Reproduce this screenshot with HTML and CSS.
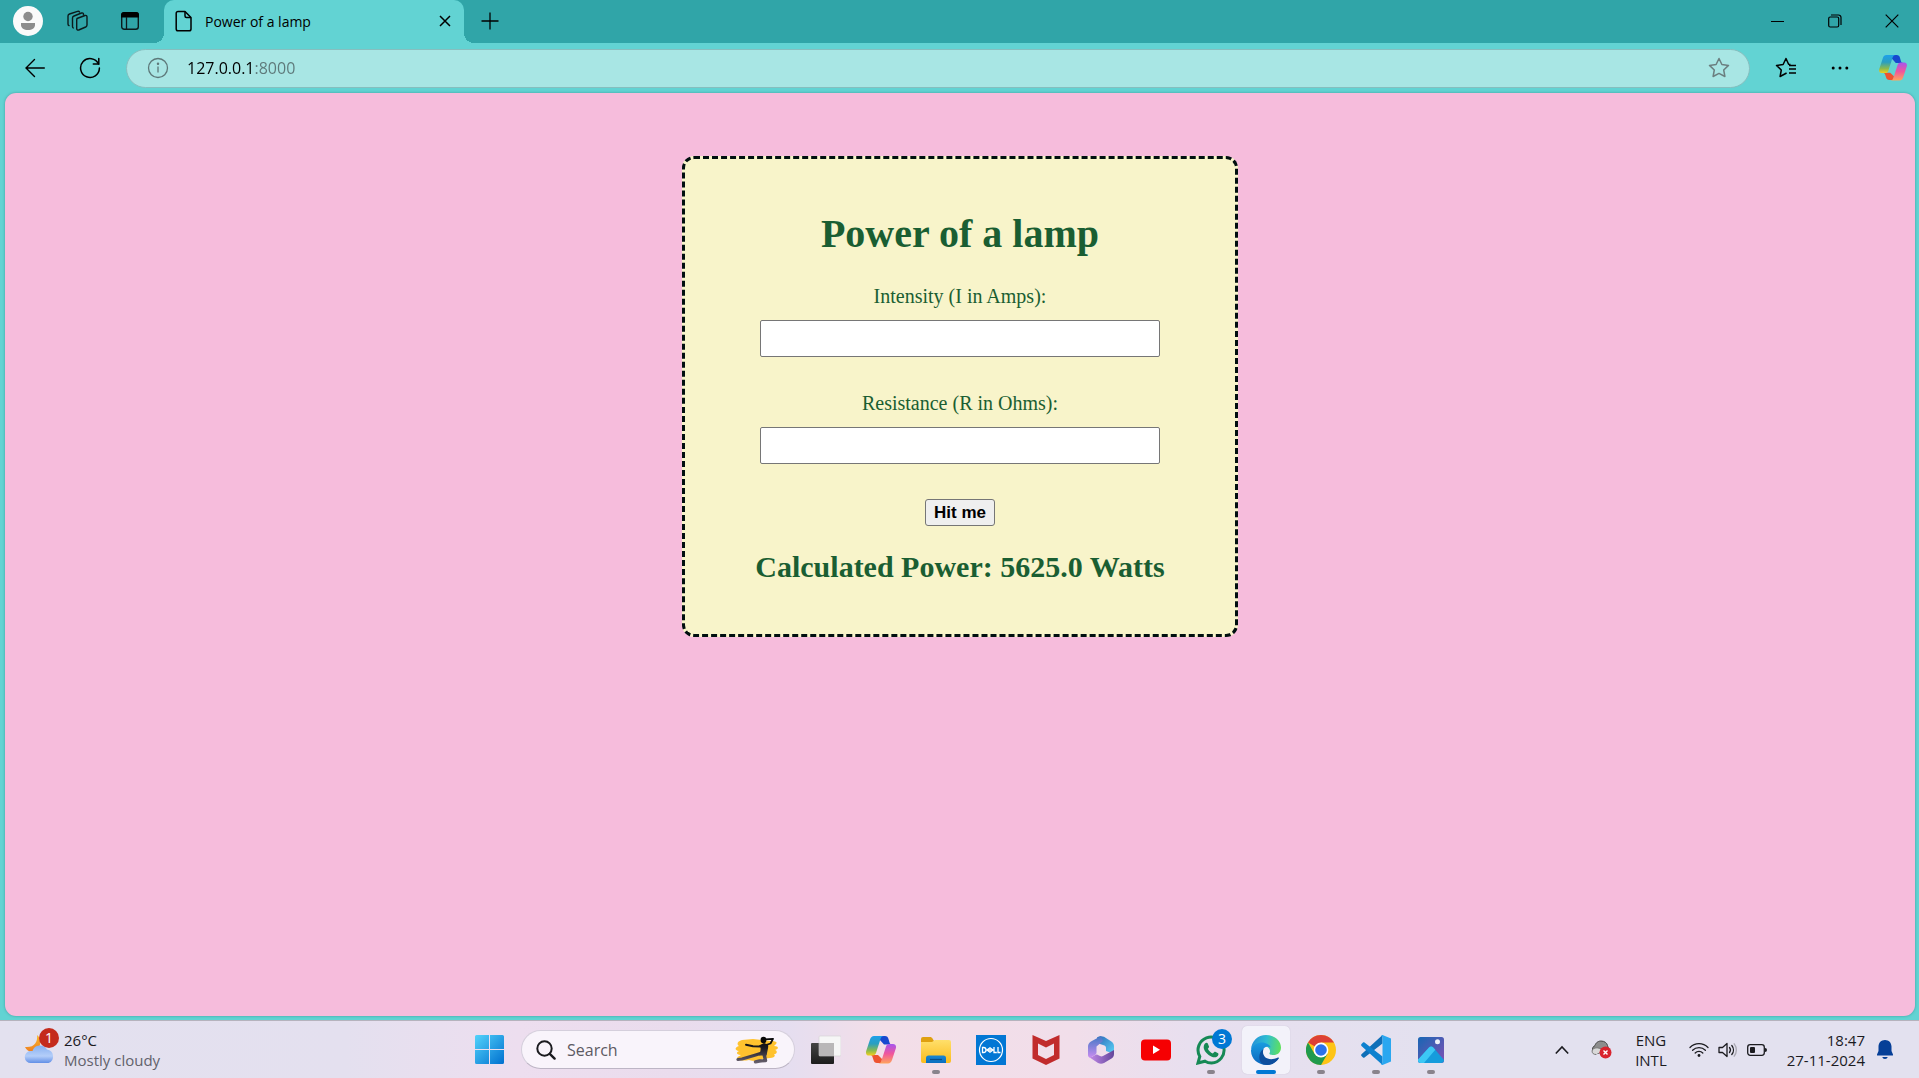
FILE: index.html
```html
<!DOCTYPE html>
<html lang="en">
<head>
<meta charset="utf-8">
<title>Power of a lamp</title>
<link rel="stylesheet" href="styles.css">
</head>
<body>
<svg class="defs" aria-hidden="true">
  <defs>
    <linearGradient id="cpA" x1="0" y1="0" x2="0" y2="1"><stop offset="0" stop-color="#1ea0ea"/><stop offset=".4" stop-color="#2a9fc0"/><stop offset=".75" stop-color="#8cba4c"/><stop offset="1" stop-color="#f3cf1d"/></linearGradient>
    <linearGradient id="cpB" x1="0" y1="0" x2="0" y2="1"><stop offset="0" stop-color="#a555ee"/><stop offset=".5" stop-color="#f0569c"/><stop offset="1" stop-color="#ffa45c"/></linearGradient>
    <linearGradient id="win" x1="0" y1="0" x2="1" y2="1"><stop offset="0" stop-color="#53d3fb"/><stop offset="1" stop-color="#0070cf"/></linearGradient>
    <linearGradient id="fold" x1="0" y1="0" x2="0" y2="1"><stop offset="0" stop-color="#ffdf6b"/><stop offset="1" stop-color="#fbbc1d"/></linearGradient>
    <linearGradient id="blue" x1="0" y1="0" x2="0" y2="1"><stop offset="0" stop-color="#1a86d0"/><stop offset="1" stop-color="#0a6ec0"/></linearGradient>
    <linearGradient id="cloud" x1="0" y1="0" x2="0" y2="1"><stop offset="0" stop-color="#88b0f0"/><stop offset=".6" stop-color="#b4cef9"/><stop offset="1" stop-color="#628fe6"/></linearGradient>
    <linearGradient id="moon" x1="0" y1="0" x2="0" y2="1"><stop offset="0" stop-color="#fbb829"/><stop offset="1" stop-color="#ee7f22"/></linearGradient>
    <linearGradient id="dark" x1="0" y1="0" x2="0" y2="1"><stop offset="0" stop-color="#444"/><stop offset="1" stop-color="#1c1c1c"/></linearGradient>
    <linearGradient id="edgeTop" x1="0" y1=".4" x2="1" y2=".5"><stop offset="0" stop-color="#2590d8"/><stop offset=".5" stop-color="#2fbdd2"/><stop offset="1" stop-color="#5fe05e"/></linearGradient>
    <linearGradient id="edgeLeft" x1="0" y1="0" x2="0" y2="1"><stop offset="0" stop-color="#1a9be0"/><stop offset="1" stop-color="#0a66bd"/></linearGradient>
    <linearGradient id="photo" x1="0" y1="0" x2="1" y2="1"><stop offset="0" stop-color="#1767b4"/><stop offset="1" stop-color="#8250b4"/></linearGradient>
    <linearGradient id="m1" x1="0" y1="0" x2="1" y2="1"><stop offset="0" stop-color="#2d69b8"/><stop offset="1" stop-color="#5ad4f8"/></linearGradient>
    <linearGradient id="m2" x1="0" y1="0" x2="0" y2="1"><stop offset="0" stop-color="#3f78c4"/><stop offset="1" stop-color="#c78cf0"/></linearGradient>
    <linearGradient id="m3" x1="0" y1="0" x2="1" y2="0"><stop offset="0" stop-color="#c48bea"/><stop offset="1" stop-color="#63469a"/></linearGradient>
    <linearGradient id="kick" gradientUnits="userSpaceOnUse" x1="0" y1="2" x2="0" y2="27"><stop offset="0" stop-color="#050505"/><stop offset=".4" stop-color="#1c1a20"/><stop offset="1" stop-color="#68616f"/></linearGradient>
    <symbol id="copilot" viewBox="0 0 30 28">
      <path d="M15 0h4c2 0 3 1 3.500 3l1 3.500c.5 1.500 1 2 2.500 2h-8L13 3z" fill="#1748cf"/>
      <path d="M15.500 27H11c-2 0-3-1-3.500-3l-1-3c-.5-1.500-1-2-2.500-2h8l4 4z" fill="#ee5330"/>
      <path d="M8 0h10c-2 0-3 1.300-3.500 3L10 17c-.5 1.500-1.500 2.500-3.500 2.500H3c-2.500 0-3.500-2-2.800-4.500L4 3.500C4.800 1.200 6 0 8 0z" fill="url(#cpA)"/>
      <path d="M22 27.500H12c2 0 3-1.300 3.500-3L20 10.500C20.500 9 21.500 8 23.500 8H27c2.500 0 3.500 2 2.800 4.500L26 24c-.8 2.300-2 3.500-4 3.500z" fill="url(#cpB)"/>
    </symbol>
  </defs>
</svg>

<header class="browser">
  <div class="tabstrip">
    <button class="chrome-btn avatar" aria-label="Profile"><svg width="30" height="30" viewBox="0 0 30 30"><circle cx="15" cy="15" r="15" fill="#fafafa"/><circle cx="15" cy="10.500" r="4.700" fill="#8c8c8c"/><path d="M8 17h14v2c0 3-3 5-7 5s-7-2-7-5z" fill="#8c8c8c"/></svg></button>
    <button class="chrome-btn" aria-label="Workspaces"><svg width="22" height="22" viewBox="0 0 22 22" fill="none" stroke="#0b1b1c" stroke-width="1.400" stroke-linejoin="round" stroke-linecap="round"><path d="M11 8.500l8-3c1-.3 2 .3 2 1.300V15c0 1-.5 1.600-1.300 2l-7 3c-1 .4-2-.2-2-1.200v-8.300c0-1 .3-1.700.3-2z"/><path d="M17.500 5V4.300c0-1-1-1.700-2-1.300L8 6c-1 .4-1.500 1-1.500 2v8.500c0 .7.300 1.200.8 1.500"/><path d="M13.500 2c-.3-.7-1-1-2-.7L3.500 4C2.500 4.400 2 5 2 6v8c0 .7.300 1.300 1 1.600"/></svg></button>
    <button class="chrome-btn" aria-label="Tab actions"><svg width="20" height="20" viewBox="0 0 20 20"><rect x="1.700" y="1.700" width="16.600" height="16.600" rx="2.500" fill="none" stroke="#0b1b1c" stroke-width="1.400"/><path d="M1 6.500V4a3 3 0 013-3h12a3 3 0 013 3v2.500z" fill="#000"/><path d="M6.500 6v12" stroke="#0b1b1c" stroke-width="1.300"/></svg></button>
    <div class="tab">
      <svg width="18" height="22" viewBox="0 0 18 22" fill="none" stroke="#000" stroke-width="1.500" stroke-linejoin="round"><path d="M3 1.500h7l6 6V19a1.800 1.800 0 01-1.800 1.800H3A1.800 1.800 0 011.200 19V3.300A1.800 1.800 0 013 1.500z"/><path d="M10 1.500V6a1.500 1.500 0 001.500 1.500H16"/></svg>
      <span class="tab-title">Power of a lamp</span>
      <button class="chrome-btn" aria-label="Close tab"><svg width="12" height="12" viewBox="0 0 12 12"><path d="M1 1l10 10M11 1L1 11" stroke="#000" stroke-width="1.500"/></svg></button>
    </div>
    <button class="chrome-btn" aria-label="New tab"><svg width="18" height="18" viewBox="0 0 18 18"><path d="M9 .5v17M.5 9h17" stroke="#000" stroke-width="1.300"/></svg></button>
    <div class="window-controls">
      <button class="chrome-btn" aria-label="Minimise"><svg width="14" height="14" viewBox="0 0 14 14"><path d="M0 7.500h13" stroke="#000"/></svg></button>
      <button class="chrome-btn" aria-label="Restore"><svg width="14" height="14" viewBox="0 0 14 14" fill="none" stroke="#000" stroke-width="1.200"><rect x=".7" y="3" width="10" height="10" rx="1.500"/><path d="M3 1h7.500A2.500 2.500 0 0113 3.500V11"/></svg></button>
      <button class="chrome-btn" aria-label="Close"><svg width="14" height="14" viewBox="0 0 14 14"><path d="M.7.700l12.600 12.600M13.300.700L.7 13.300" stroke="#000" stroke-width="1.200"/></svg></button>
    </div>
  </div>
  <div class="toolbar">
    <button class="chrome-btn" aria-label="Back"><svg width="20" height="20" viewBox="0 0 20 20" fill="none" stroke="#000" stroke-width="1.400" stroke-linecap="round"><path d="M19.300 10H1M9.500 1.500L1 10l8.500 8.500"/></svg></button>
    <button class="chrome-btn" aria-label="Refresh"><svg width="22" height="22" viewBox="0 0 22 22" fill="none" stroke="#000" stroke-width="1.500" stroke-linecap="round"><path d="M19.500 7A9.400 9.400 0 1020.400 11"/><path d="M19.800 1.500V7h-5.500"/></svg></button>
    <div class="address">
      <svg width="22" height="22" viewBox="0 0 22 22" fill="none" stroke="#5d7879" stroke-width="1.300"><circle cx="11" cy="11" r="9.500"/><path d="M11 9.500v6"/><circle cx="11" cy="6.800" r=".6" fill="#5d7879"/></svg>
      <input class="url" type="text" value="127.0.0.1:8000" aria-label="Address">
      <button class="chrome-btn" aria-label="Favourite this page"><svg width="22" height="22" viewBox="0 0 22 22" fill="none" stroke="#6b7f80" stroke-width="1.500" stroke-linejoin="round"><path d="M11 1.500l2.900 6 6.600.9-4.800 4.600 1.200 6.500L11 16.400l-5.900 3.100L6.300 13 1.500 8.400l6.600-.9z"/></svg></button>
    </div>
    <div class="tools">
      <button class="chrome-btn" aria-label="Favourites"><svg width="22" height="22" viewBox="0 0 22 22" fill="none" stroke="#000" stroke-width="1.500" stroke-linejoin="round"><path d="M15.500 7.500L13.600 7.300 11 1.500 8.100 7.500l-6.600.9L6.300 13l-1.200 6.500 6.500-3.500"/><path d="M14 8.500h7M14 12h7M14 16h7" stroke-width="1.400"/></svg></button>
      <button class="chrome-btn" aria-label="Settings"><svg width="18" height="6" viewBox="0 0 18 6"><circle cx="2.200" cy="3" r="1.500"/><circle cx="9" cy="3" r="1.500"/><circle cx="15.800" cy="3" r="1.500"/></svg></button>
      <button class="chrome-btn" aria-label="Copilot"><svg width="28" height="26"><use href="#copilot"/></svg></button>
    </div>
  </div>
</header>

<main class="page">
  <form class="card">
    <h1>Power of a lamp</h1>
    <label for="intensity">Intensity (I in Amps):</label>
    <input id="intensity" class="field" type="text">
    <label for="resistance">Resistance (R in Ohms):</label>
    <input id="resistance" class="field" type="text">
    <button class="submit" type="button">Hit me</button>
    <h2>Calculated Power: 5625.0 Watts</h2>
  </form>
</main>

<footer class="taskbar">
  <div class="weather">
    <div class="weather-icon">
      <svg width="32" height="30" viewBox="0 0 32 30"><path d="M13 0c1 7-3 13-12 12 2 5 8 6 12 3s5-12 0-15z" fill="url(#moon)"/><path d="M7 28a6 6 0 01-.5-12h2A8 8 0 0123 14.500a7 7 0 011.500 13.500z" fill="url(#cloud)"/></svg>
      <span class="badge badge-red">1</span>
    </div>
    <div class="stack"><span>26°C</span><span class="muted">Mostly cloudy</span></div>
  </div>

  <nav class="apps" aria-label="Taskbar apps">
    <button class="app" aria-label="Start"><svg width="30" height="30" viewBox="0 0 30 30"><path d="M1.500 0H14v14H0V1.500A1.500 1.500 0 011.500 0zM15 0h12.500A1.500 1.500 0 0129 1.500V14H15zM0 15h14v14H1.500A1.500 1.500 0 010 27.500zM15 15h14v12.500a1.500 1.500 0 01-1.500 1.500H15z" fill="url(#win)"/></svg></button>
    <div class="search">
      <svg width="20" height="20" viewBox="0 0 20 20" fill="none" stroke="#1b1b1f" stroke-width="2" stroke-linecap="round"><circle cx="8.500" cy="8.500" r="7.200"/><path d="M13.800 13.800l4.800 4.800" stroke-width="2.400"/></svg>
      <input type="search" placeholder="Search" aria-label="Search">
      <svg width="44" height="28" viewBox="0 0 44 28">
        <path d="M7 4l11-1 18 2c4 0 7 1 5 3l-2 2c5 0 5 3 1 4 3 1 2 4-1 4 2 2 0 4-4 4l-8 1c-4 3-9 2-13 1-5 1-11 1-12-2 1-2 3-2 4-3-5 0-5-3-2-4-5-1-4-4 0-5-3-2-1-5 3-6z" fill="#ffc22e"/>
        <g fill="none" stroke="url(#kick)" stroke-linejoin="round" stroke-linecap="round">
          <path d="M26 10.500L18 10.300l-7-1.500" stroke-width="2"/>
          <path d="M31 9l4.500-1.500L38 2.800l-8 .5" stroke-width="1.800"/>
          <path d="M27 17l-8 2.500L7 23l-4 .5" stroke-width="3.200"/>
          <path d="M29 18l1.500 6.500-6 .5-4 .8" stroke-width="3.400"/>
        </g>
        <path d="M24 9.500l5-2.500 4 1.500c.8 3-.8 6-1.300 11L24 19.500c1-3 2-5 1.500-8z" fill="url(#kick)"/>
        <ellipse cx="28.500" cy="4" rx="2.900" ry="3.300" fill="#080808"/>
      </svg>
    </div>
    <button class="app" aria-label="Task view"><svg width="30" height="30" viewBox="0 0 30 30"><rect x="0" y="8" width="23" height="21" rx="1" fill="url(#dark)"/><rect x="8" y="1" width="22" height="20" rx="1" fill="#f6f6f6" stroke="#d5d0d4" stroke-width=".6"/><path d="M8 8h15v13H9a1 1 0 01-1-1z" fill="#b9b7b8"/></svg></button>
    <button class="app" aria-label="Copilot"><svg width="30" height="28"><use href="#copilot"/></svg></button>
    <button class="app running" aria-label="File Explorer"><svg width="30" height="30" viewBox="0 0 30 30"><path d="M0 4a2 2 0 012-2h7c1 0 2 .5 2.500 1.500L13 6v3H0z" fill="#dfa010"/><path d="M0 7h11l3-2h14a2 2 0 012 2v19a2 2 0 01-2 2H2a2 2 0 01-2-2z" fill="url(#fold)"/><path d="M5 28v-5a2.500 2.500 0 012.500-2.500h15A2.500 2.500 0 0125 23v5z" fill="url(#blue)"/><path d="M9 24.500h12" stroke="#0a4d87" stroke-width="1.200"/></svg></button>
    <button class="app" aria-label="Dell"><svg width="30" height="30" viewBox="0 0 30 30"><rect width="30" height="30" fill="#0277d4"/><circle cx="15" cy="15" r="11.500" fill="none" stroke="#fff" stroke-width="1.200"/><g fill="none" stroke="#fff" stroke-width="1.300"><path d="M6.500 12.500v5h1.200a2.300 2.500 0 000-5zM11 15l3-2.300 3 2.300-3 2.300zM12.500 15h3M18 12v5.500h2.800M22 12v5.500h2.500"/></g></svg></button>
    <button class="app" aria-label="McAfee"><svg width="28" height="30" viewBox="0 0 28 30"><path d="M.5 0L14 6 27.500 0v23.500L14 30 .5 23.500zM6 8.500v11.500l8 4 8-4V8.500l-8 4z" fill="#c12b2c" fill-rule="evenodd"/></svg></button>
    <button class="app" aria-label="Microsoft 365"><svg width="28" height="28" viewBox="0 0 28 28"><path d="M10 1.500C12 0 15-.2 17 .8l7 4.500c2 1.300 3 3 3 5V18l-8-3v-3c0-1-.5-2-1.500-2.500L10 7z" fill="url(#m1)"/><path d="M14 0L4 5.500C2 6.800 1 8.500 1 10.500V19c0 2 1.500 3 3.500 2l3.500-2c1-.7 1.500-1.500 1.500-2.500v-6L16 5z" fill="url(#m2)"/><path d="M2 21c4 1 6-3 8-2.500l3 1.500c1 .5 2 .5 3 0l11-6v4c0 2-1 3.500-2.500 4.500L17 27c-2 1-4 1-6 0z" fill="url(#m3)"/></svg></button>
    <button class="app" aria-label="YouTube"><svg width="30" height="22" viewBox="0 0 30 22"><rect y=".5" width="30" height="21" rx="4" fill="#f60002"/><path d="M12 6.500v8.500l7-4.200z" fill="#fff"/></svg></button>
    <button class="app running" aria-label="WhatsApp"><svg width="30" height="30" viewBox="0 0 30 30"><path d="M2 28l1.800-6.500A13 13 0 1115.500 28c-2.400 0-4.600-.6-6.500-1.800z" fill="none" stroke="#168955" stroke-width="3"/><path d="M9 8.500c1-1 2.300-1 2.800 0l1.200 3c.2.500 0 1-1.200 2.300 1 2.200 2.800 3.800 5 4.700 1.500-1.800 1.800-2 2.500-1.700l2.800 1.400c.6.400.4 2-.4 2.900-1.300 1.400-3.500 1.700-6.500.4-3.500-1.500-6.500-5-7.300-7.700-.5-2.300 0-4.300 1.100-5.300z" fill="#168955"/></svg><span class="badge badge-blue">3</span></button>
    <button class="app running active" aria-label="Edge"><svg width="30" height="30" viewBox="0 0 30 30"><path d="M0 14.500C.5 6 7 0 15 0c9 0 15 6 15 12.500 0 5-3.500 7.500-7.500 7.500-3 0-4.500-1-4-2 1.500-2 0-6-4-6.500C8 10 2 12.500 0 14.500z" fill="url(#edgeTop)"/><path d="M0 15C2.500 8.500 9.500 6.500 14 8c4 1.200 5.500 3 5.500 4.500-3-2-6.500-.5-7.500 2.500-1.500 5 2 10 8 10.500 3 .3 5.500-.8 7.500-2C25 27.500 20.500 30 15.500 30 6.500 30-.3 23.500 0 15z" fill="url(#edgeLeft)"/><path d="M12.500 14c-2.500 7.500 4.500 13 14.500 8.500.8-.3 1.200.3.800 1C24 29 18 31 13 29.500 6.500 27 7 17.500 12.500 14z" fill="#0d4e9e"/></svg></button>
    <button class="app running" aria-label="Chrome"><svg width="30" height="30" viewBox="0 0 30 30"><circle cx="15" cy="15" r="15" fill="#fdc416"/><path d="M15 15L2 7.500A15 15 0 0115 0a15 15 0 0113 7.500H15z" fill="#dd4035"/><path d="M2 7.500A15 15 0 0015 30l6.500-11.200L15 15 8.500 18.800z" fill="#1f9a4d"/><circle cx="15" cy="15" r="7.400" fill="#fff"/><circle cx="15" cy="15" r="5.800" fill="#2b72ea"/></svg></button>
    <button class="app running" aria-label="Visual Studio Code"><svg width="30" height="30" viewBox="0 0 30 30"><path d="M21.500 0v8.500L3.500 22.500c-.5.400-1 .3-1.500 0L.5 21c-.6-.6-.5-1.300 0-1.800z" fill="#0f6fb8"/><path d="M.5 9L2 7.600c.5-.5 1-.5 1.500-.1l18 14V30L.5 11c-.5-.6-.5-1.400 0-2z" fill="#0d81cf"/><path d="M21.500 0L30 3.500v23L21.500 30c-.8 0-1.500-.5-1-1l1-1.500V2.500l-1-1.500c-.3-.5.400-1 1-1z" fill="#2aa7f0"/></svg></button>
    <button class="app running" aria-label="Photos"><svg width="26" height="26" viewBox="0 0 26 26"><rect width="26" height="26" rx="2.500" fill="url(#photo)"/><path d="M0 23l11-12.500c1.300-1.500 3-1.500 4.300 0L26 23a3 3 0 01-3 3H3a3 3 0 01-3-3z" fill="#159cdc"/><path d="M0 22.500L11 10.500c1.300-1.500 3-1.500 4.300 0l2 2.300L6 26H3a3 3 0 01-3-3z" fill="#3cc8f5"/><circle cx="19.500" cy="4.800" r="2.500" fill="#eef2fa"/></svg></button>
  </nav>

  <div class="tray">
    <button class="chrome-btn" aria-label="Show hidden icons"><svg width="14" height="10" viewBox="0 0 14 10"><path d="M.8 8.500L7 2l6.200 6.500" fill="none" stroke="#1b1b1f" stroke-width="1.600"/></svg></button>
    <svg class="onedrive" width="22" height="20" viewBox="0 0 22 20"><path d="M5 14a4.500 4.500 0 01-1-8.500C5 2 8 1 10 1c3.500 0 6 2 6.500 4.500L18 10z" fill="#8d8d8d" stroke="#444"/><path d="M5 14.500c-5 0-5-5.500-1-6.500 3-.7 5 .5 9 2" fill="#d9d9d9" stroke="#777"/><circle cx="14.500" cy="12.500" r="6" fill="#d9232e"/><path d="M12.500 10.500l4 4M16.500 10.500l-4 4" stroke="#fff" stroke-width="1.400"/></svg>
    <div class="stack lang"><span>ENG</span><span>INTL</span></div>
    <div class="status">
      <svg width="20" height="20" viewBox="0 0 20 20" fill="none" stroke="#1b1b1f" stroke-width="1.300" stroke-linecap="round"><path d="M1 7.500a12.500 12.500 0 0118 0M3.600 10.300a9 9 0 0112.800 0M6.200 13a5.300 5.300 0 017.600 0"/><circle cx="10" cy="15.500" r="1.400" fill="#1b1b1f" stroke="none"/></svg>
      <svg width="20" height="20" viewBox="0 0 20 20" fill="none" stroke="#1b1b1f" stroke-width="1.300" stroke-linecap="round" stroke-linejoin="round"><path d="M1 7.500h3.500L9 3.500v13l-4.500-4H1z"/><path d="M11.500 7.500a4 4 0 010 5M13.800 5.500a7 7 0 010 9"/><path d="M16.200 3.800a10 10 0 010 12.400" stroke="#aaa8b2"/></svg>
      <svg width="20" height="20" viewBox="0 0 20 20"><rect x=".7" y="4.700" width="16.600" height="10.600" rx="2.500" fill="none" stroke="#1b1b1f" stroke-width="1.300"/><rect x="3" y="7" width="5" height="6" rx="1" fill="#1b1b1f"/><path d="M18 8a2 2 0 012 2 2 2 0 01-2 2z" fill="#1b1b1f"/></svg>
    </div>
    <div class="stack clock"><span>18:47</span><span>27-11-2024</span></div>
    <button class="chrome-btn" aria-label="Notifications"><svg width="16" height="20" viewBox="0 0 16 20"><path d="M8 0c3.800 0 6.500 2.800 6.500 6.500V11l1.500 3.500c.2.600-.1 1-.7 1H.7c-.6 0-.9-.4-.7-1L1.500 11V6.500C1.500 2.800 4.200 0 8 0zM5.300 17h5.400c-.3 1.300-1.300 2-2.700 2s-2.400-.7-2.700-2z" fill="#063f97"/></svg></button>
  </div>
</footer>
</body>
</html>
```

FILE: styles.css
```css
* { box-sizing: border-box; }

body {
  margin: 0;
  min-height: 100vh;
  display: flex;
  flex-direction: column;
  background: #62d3d3;
  font-family: "Open Sans", "Noto Sans", sans-serif;
  font-size: 14px;
  color: #1b1b1f;
}

svg { display: block; flex: none; }
.defs { position: absolute; width: 0; height: 0; }

button, input { font: inherit; color: inherit; }

.chrome-btn {
  display: flex;
  padding: 0;
  border: 0;
  background: none;
}

/* Browser frame */
.tabstrip {
  display: flex;
  align-items: center;
  height: 43px;
  padding: 0 20px 1px 13px;
  background: #30a5a8;
}
.tabstrip > .chrome-btn + .chrome-btn { margin-left: 32px; }
.avatar { margin-right: -9px; }

.tab {
  position: relative;
  align-self: flex-start;
  display: flex;
  align-items: center;
  width: 300px;
  height: 43px;
  margin: 0 17px 0 24px;
  padding: 0 13px 1px 11px;
  border-radius: 10px 10px 0 0;
  background: #62d3d3;
  color: #000;
}
.tab::before, .tab::after {
  content: "";
  position: absolute;
  bottom: 0;
  width: 10px;
  height: 10px;
}
.tab::before { right: 100%; background: radial-gradient(circle at 0 0, #30a5a8 10px, #62d3d3 10px); }
.tab::after { left: 100%; background: radial-gradient(circle at 100% 0, #30a5a8 10px, #62d3d3 10px); }
.tab-title { flex: 1; margin-left: 12px; }

.window-controls {
  display: flex;
  gap: 43px;
  margin-left: auto;
}

.toolbar {
  display: flex;
  align-items: center;
  height: 50px;
  padding: 0 12px 0 25px;
}
.toolbar > .chrome-btn { margin-right: 34px; }
.toolbar > .chrome-btn + .chrome-btn { margin-right: 25px; }

.address {
  flex: 1;
  display: flex;
  align-items: center;
  height: 39px;
  padding: 0 19px 0 20px;
  border: 1px solid #86bfbf;
  border-radius: 20px;
  background: #a8e6e4;
}
.url {
  flex: 1;
  min-width: 0;
  margin-left: 18px;
  padding: 0;
  border: 0;
  font-size: 16px;
  background: linear-gradient(90deg, #000 67px, #5d7879 67px);
  background-clip: text;
  -webkit-text-fill-color: transparent;
}
.tools {
  display: flex;
  align-items: center;
  margin-left: 25px;
}
.tools .chrome-btn + .chrome-btn { margin-left: 34px; }
.tools .chrome-btn:last-child { margin-left: 30px; }

/* Web page */
.page {
  flex: 1;
  margin: 0 4px 4px 5px;
  padding: 63px 20px;
  border-radius: 11px;
  background: #f6bcdc;
  box-shadow: 0 0 3px #3f9f9f;
}
.card {
  display: flex;
  flex-direction: column;
  align-items: center;
  max-width: 556px;
  margin: 0 auto;
  padding: 48px 20px 50px;
  border: 3px dashed #000f0f;
  border-radius: 12px;
  background: #f8f4ca;
  color: #1a5e32;
  font-family: "Liberation Serif", serif;
  font-size: 20px;
  line-height: 23px;
  text-align: center;
}
.card h1 {
  margin: 4px 0 28px;
  font-size: 40px;
  line-height: 46px;
}
.card h2 {
  margin: 24px 0 0;
  font-size: 30px;
  line-height: 34px;
}
.field {
  width: 100%;
  max-width: 400px;
  height: 37px;
  margin: 12px 0 35px;
  border: 1px solid #767676;
  border-radius: 2px;
  background: #fff;
}
.submit {
  height: 27px;
  padding: 0 8px;
  border: 1px solid #767676;
  border-radius: 3px;
  background: #efefef;
  color: #000;
  font-family: "Liberation Sans", sans-serif;
  font-size: 17px;
  font-weight: bold;
  line-height: 20px;
}

/* Taskbar */
.taskbar {
  display: grid;
  grid-template-columns: 1fr auto 1fr;
  align-items: center;
  height: 58px;
  border-top: 1px solid #b5b3bd;
  background: linear-gradient(90deg, #e3e1ef 0%, #e4e0ef 18%, #eddeef 27%, #eadced 35%, #e5def0 41%, #f3dee8 46%, #f1deea 56%, #e8dfef 62%, #e3e1ef 75%);
}
.stack {
  display: flex;
  flex-direction: column;
  font-size: 15px;
  line-height: 20px;
}
.muted { color: #62616b; }
.weather {
  display: flex;
  align-items: center;
  gap: 8px;
  padding-left: 24px;
}
.weather-icon { position: relative; }
.badge {
  position: absolute;
  width: 20px;
  height: 20px;
  border-radius: 50%;
  color: #fff;
  line-height: 20px;
  text-align: center;
}
.badge-red { top: -7px; right: -3px; background: #c42b1c; }
.badge-blue { top: 3px; right: 3px; background: #0078d4; }

.apps {
  display: flex;
  align-items: center;
  gap: 7px;
  padding-left: 2px;
}
.app {
  position: relative;
  display: flex;
  align-items: center;
  justify-content: center;
  width: 48px;
  height: 48px;
  padding: 0;
  border: 0;
  border-radius: 5px;
  background: none;
}
.app.active { background: #f3f2fa; box-shadow: 0 0 1px #bbb8c8; }
.running::after {
  content: "";
  position: absolute;
  bottom: 0;
  width: 8px;
  height: 4px;
  border-radius: 2px;
  background: #89838c;
}
.active::after { width: 20px; background: #0078d4; }
.search {
  display: flex;
  align-items: center;
  width: 274px;
  height: 39px;
  padding: 0 15px 0 14px;
  border: 1px solid #d5cfdc;
  border-bottom-color: #bdb5c5;
  border-radius: 20px;
  background: #f9f4fb;
}
.search input {
  flex: 1;
  min-width: 0;
  margin-left: 11px;
  padding: 0;
  border: 0;
  background: none;
  font-size: 16px;
}
.search input::placeholder { color: #5d5a63; opacity: 1; }

.tray {
  display: flex;
  align-items: center;
  justify-content: flex-end;
  padding-right: 26px;
}
.onedrive { margin: 0 22px; }
.lang { align-items: center; }
.status {
  display: flex;
  gap: 9px;
  margin: 0 20px 0 22px;
}
.clock { align-items: flex-end; margin-right: 12px; }
```
